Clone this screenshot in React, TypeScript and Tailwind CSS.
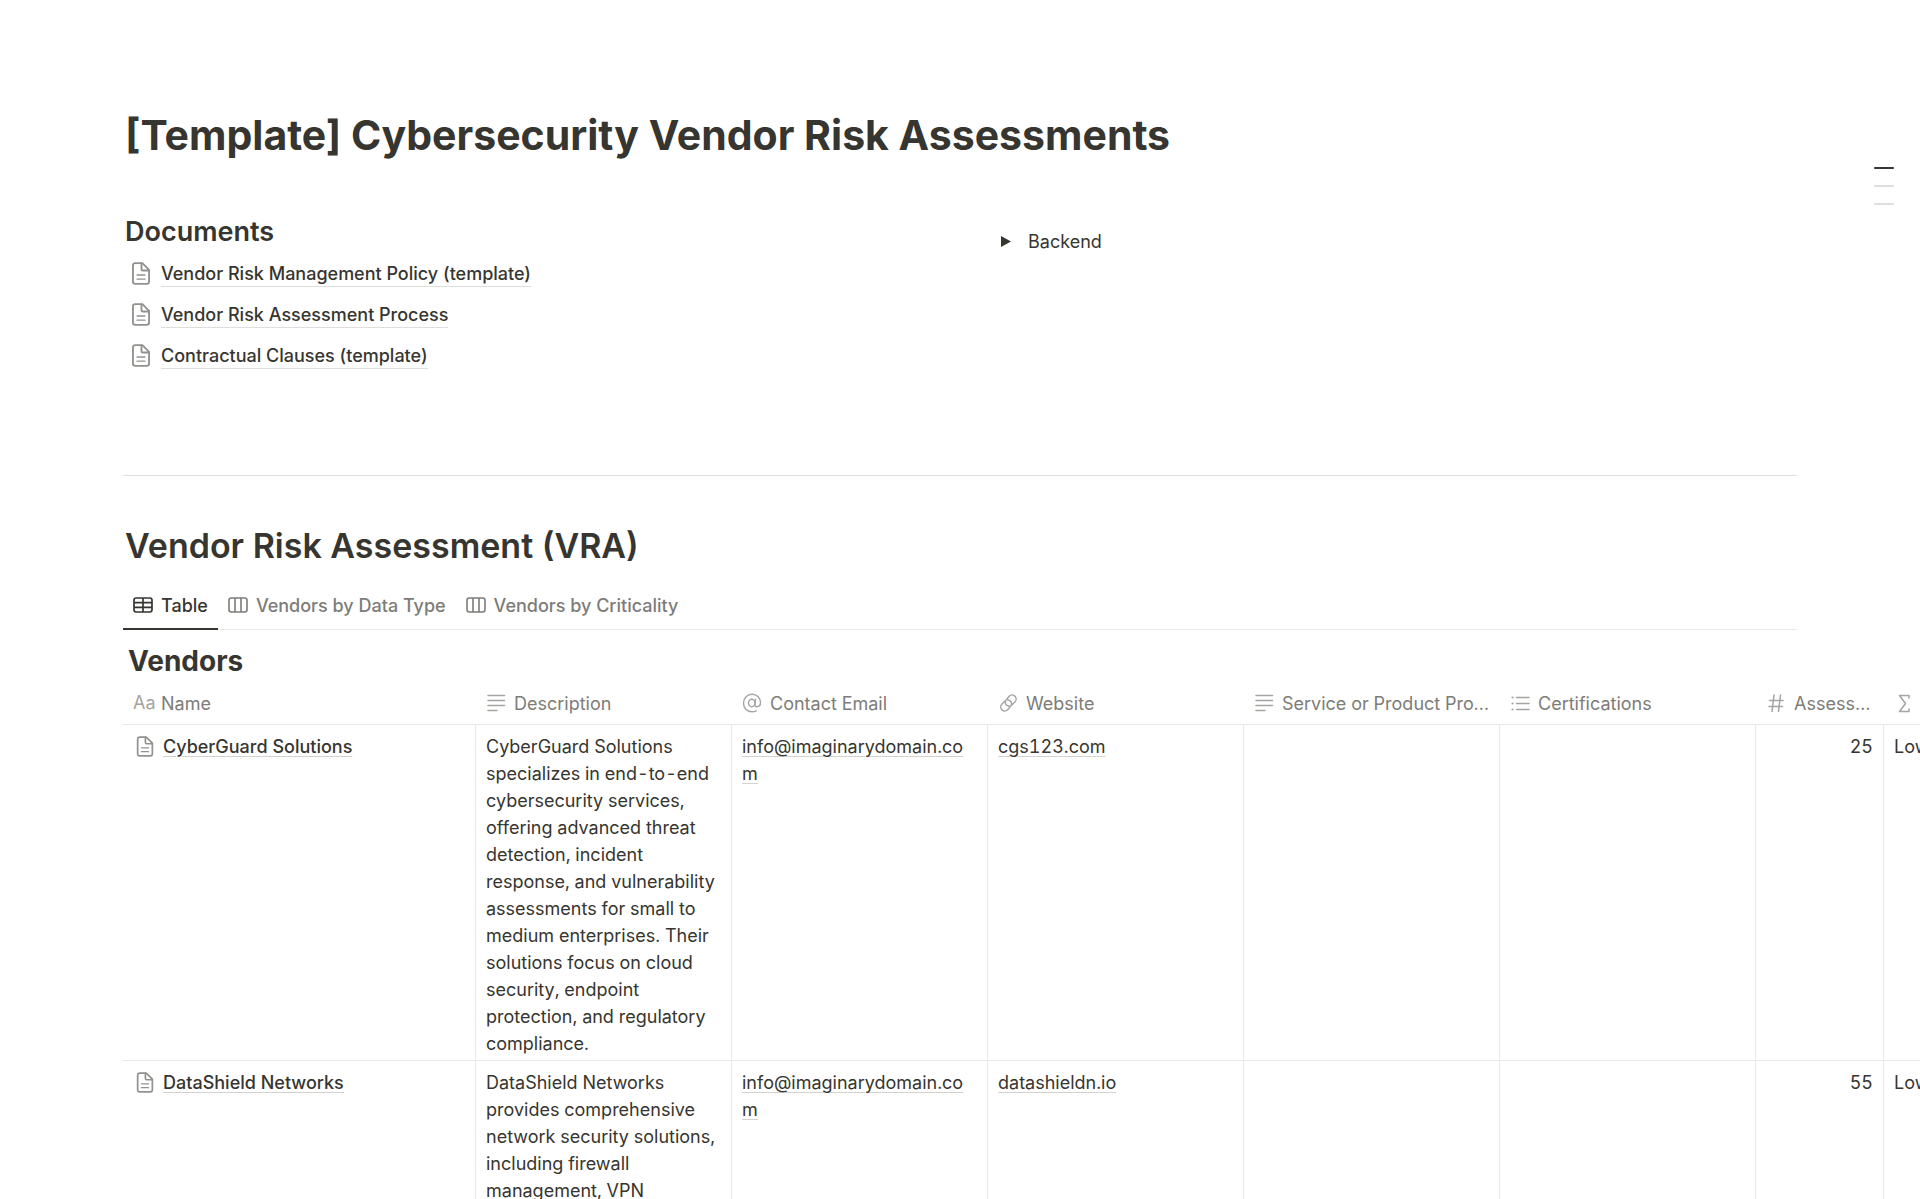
import type { ReactNode } from "react";

type IconProps = { className?: string };

function PageIcon({ className = "" }: IconProps) {
  return (
    <svg className={className} viewBox="0 0 16 20" fill="none" stroke="currentColor" strokeWidth="1.600" strokeLinejoin="round" strokeLinecap="round" aria-hidden="true">
      <path d="M3 1h6.200L15 6.800V17a2 2 0 0 1-2 2H3a2 2 0 0 1-2-2V3a2 2 0 0 1 2-2z" />
      <path d="M8.400 1.200V6.200a1.200 1.200 0 0 0 1.200 1.200H14.800" />
      <path d="M4.600 11.300h6.800M4.600 14.900h6.800" strokeWidth="1.200" />
    </svg>
  );
}

function TableIcon() {
  return (
    <svg className="h-4 w-5" viewBox="0 0 20 16" fill="none" stroke="currentColor" strokeWidth="1.700" aria-hidden="true">
      <rect x="1" y="1" width="18" height="14" rx="2.200" />
      <path d="M1 5.600h18M1 10.300h18M10 1v14" />
    </svg>
  );
}

function BoardIcon() {
  return (
    <svg className="h-4 w-5" viewBox="0 0 20 16" fill="none" stroke="currentColor" strokeWidth="1.600" aria-hidden="true">
      <rect x="1" y="1" width="18" height="14" rx="2.200" />
      <path d="M7 1v14M13 1v14" />
    </svg>
  );
}

function TextIcon() {
  return (
    <svg className="h-5 w-5" viewBox="0 0 20 20" stroke="currentColor" strokeWidth="1.500" strokeLinecap="round" aria-hidden="true">
      <path d="M2 2.500h16.500M2 7.500h16.500M2 12.500h16.500M2 17.500h9" />
    </svg>
  );
}

function ListIcon() {
  return (
    <svg className="h-5 w-5" viewBox="0 0 20 20" stroke="currentColor" strokeWidth="1.500" strokeLinecap="round" aria-hidden="true">
      <path d="M6.500 4.500h12.500M6.500 10.500h12.500M6.500 16.500h12.500" />
      <path d="M2.500 4.500h.01M2.500 10.500h.01M2.500 16.500h.01" strokeWidth="2.200" />
    </svg>
  );
}

function AtIcon() {
  return (
    <svg className="h-5 w-5" viewBox="0 0 24 24" fill="none" stroke="currentColor" strokeWidth="1.700" strokeLinecap="round" aria-hidden="true">
      <ellipse cx="11.700" cy="12" rx="3.900" ry="4.500" />
      <path d="M16.200 7.500l-.6 6.500c-.1 1.500.7 2.500 2.200 2.500 2.400 0 4.400-2 4.400-5C22.200 6 18 1.500 12.200 1.500S1.800 6.200 1.800 12s4 10.500 10.200 10.500c2 0 3.600-.4 5-1.100" />
    </svg>
  );
}

function LinkIcon() {
  return (
    <svg className="h-5 w-5" viewBox="0 0 24 24" fill="none" stroke="currentColor" strokeWidth="1.700" strokeLinecap="round" aria-hidden="true">
      <g transform="translate(12.500 12) rotate(-47)">
        <path d="M-2.500 4.800H-6.500a4.800 4.800 0 0 1 0-9.600H-1.500a4.800 4.800 0 0 1 2.800 8.700" />
        <path d="M2.500 -4.800H6.500a4.800 4.800 0 0 1 0 9.600H1.500a4.800 4.800 0 0 1-2.800-8.700" />
      </g>
    </svg>
  );
}

function HashIcon() {
  return (
    <svg className="h-5 w-5" viewBox="0 0 20 20" fill="none" stroke="currentColor" strokeWidth="1.500" strokeLinecap="round" aria-hidden="true">
      <path d="M8 2L6 18.500M14.500 2l-2 16.500M3.500 7.500h13.500M3 13.500h13.500" />
    </svg>
  );
}

function SigmaIcon() {
  return (
    <svg className="h-5 w-5" viewBox="0 0 20 20" fill="none" stroke="currentColor" strokeWidth="1.500" strokeLinecap="round" strokeLinejoin="round" aria-hidden="true">
      <path d="M15 5V2.500H5.500l6 8-6 8H15V16" />
    </svg>
  );
}

const documents = [
  "Vendor Risk Management Policy (template)",
  "Vendor Risk Assessment Process",
  "Contractual Clauses (template)",
];

const tabs = [
  { label: "Table", icon: <TableIcon />, active: true },
  { label: "Vendors by Data Type", icon: <BoardIcon />, active: false },
  { label: "Vendors by Criticality", icon: <BoardIcon />, active: false },
];

const columns: { label: string; icon: ReactNode; width: string }[] = [
  { label: "Name", icon: <span className="block w-5 text-lg">Aa</span>, width: "w-[353px]" },
  { label: "Description", icon: <TextIcon />, width: "w-64" },
  { label: "Contact Email", icon: <AtIcon />, width: "w-64" },
  { label: "Website", icon: <LinkIcon />, width: "w-64" },
  { label: "Service or Product Provided", icon: <TextIcon />, width: "w-64" },
  { label: "Certifications", icon: <ListIcon />, width: "w-64" },
  { label: "Assessment", icon: <HashIcon />, width: "w-32" },
  { label: "Risk Level", icon: <SigmaIcon />, width: "w-64" },
];

const vendors = [
  {
    name: "CyberGuard Solutions",
    description:
      "CyberGuard Solutions specializes in end-to-end cybersecurity services, offering advanced threat detection, incident response, and vulnerability assessments for small to medium enterprises. Their solutions focus on cloud security, endpoint protection, and regulatory compliance.",
    email: "info@imaginarydomain.com",
    website: "cgs123.com",
    score: 25,
    level: "Low",
  },
  {
    name: "DataShield Networks",
    description:
      "DataShield Networks provides comprehensive network security solutions, including firewall management, VPN",
    email: "info@imaginarydomain.com",
    website: "datashieldn.io",
    score: 55,
    level: "Low",
  },
];

const cell = "border-b border-r border-[#e9e9e7] px-[10px] pt-2 pb-[3px] align-top";
const link = "underline decoration-[#d3d2cf] decoration-1 underline-offset-3";

export default function App() {
  return (
    <main className="relative overflow-hidden bg-white pt-[108px] pl-[123px] font-['Inter',sans-serif] text-lg leading-[27px] text-[#37352f]">
      <nav aria-label="Page outline" className="absolute top-[167px] right-[26px] flex flex-col gap-4">
        <a href="#documents" aria-label="Documents" className="h-[2px] w-5 rounded bg-[#37352f]" />
        <a href="#vra" aria-label="Vendor Risk Assessment" className="h-[2px] w-5 rounded bg-[#dededc]" />
        <a href="#vendors" aria-label="Vendors" className="h-[2px] w-5 rounded bg-[#dededc]" />
      </nav>

      <div className="mr-[123px]">
        <h1 className="px-[2px] text-[41px] leading-[54px] font-bold">[Template] Cybersecurity Vendor Risk Assessments</h1>

        <div className="mt-[52px] grid grid-cols-2 gap-20">
          <section>
            <h3 id="documents" className="px-[2px] text-[27px] leading-9 font-semibold">Documents</h3>
            <ul className="mt-[3px]">
              {documents.map((title) => (
                <li key={title} className="flex h-[41px] items-center gap-[10px] pl-2">
                  <PageIcon className="h-[23px] w-5 text-[#91918e]" />
                  <a href="#" className="border-b border-[#dededc] pt-[2px] leading-6 font-medium">{title}</a>
                </li>
              ))}
            </ul>
          </section>
          <section className="pt-[14px]">
            <button type="button" aria-expanded="false" className="flex items-center gap-4">
              <svg className="h-[11px] w-3" viewBox="0 0 12 11" fill="currentColor" aria-hidden="true">
                <path d="M1 0l10 5.500L1 11z" />
              </svg>
              Backend
            </button>
          </section>
        </div>

        <hr className="mt-[99px] border-[#dfdfdd]" />

        <h2 id="vra" className="mt-[50px] px-[2px] text-[34px] leading-10 font-semibold">Vendor Risk Assessment (VRA)</h2>

        <div role="tablist" className="mt-[14px] flex h-[50px] border-b border-[#e9e9e7]">
          {tabs.map((tab) => (
            <button
              key={tab.label}
              type="button"
              role="tab"
              aria-selected={tab.active}
              className={
                tab.active
                  ? "-mb-px flex items-center gap-2 border-b-2 border-[#37352f] px-[10px] pt-[2px] font-medium"
                  : "-mb-px flex items-center gap-2 border-b-2 border-transparent px-[10px] pt-[2px] font-medium text-[#7d7c78]"
              }
            >
              {tab.icon}
              {tab.label}
            </button>
          ))}
        </div>
      </div>

      <h3 id="vendors" className="mt-[11px] px-[5px] text-[28px] leading-10 font-bold">Vendors</h3>

      <div className="overflow-hidden">
        <table className="w-[2009px] table-fixed border-separate border-spacing-0 tabular-nums">
          <thead>
            <tr>
              {columns.map((column) => (
                <th key={column.label} scope="col" className={`${column.width} h-11 border-b border-[#e9e9e7] px-[10px] pt-px text-left font-normal text-[#7d7c78]`}>
                  <span className="flex items-center gap-2">
                    <span className="shrink-0 text-[#a5a4a1]">{column.icon}</span>
                    <span className="truncate">{column.label}</span>
                  </span>
                </th>
              ))}
            </tr>
          </thead>
          <tbody>
            {vendors.map((vendor) => (
              <tr key={vendor.name}>
                <td className={cell}>
                  <span className="flex items-center gap-2 pl-[2px]">
                    <PageIcon className="h-[21px] w-5 text-[#91918e]" />
                    <a href="#" className={`${link} font-medium`}>{vendor.name}</a>
                  </span>
                </td>
                <td className={cell}>{vendor.description}</td>
                <td className={`${cell} break-all`}>
                  <a href="#" className={link}>{vendor.email}</a>
                </td>
                <td className={cell}>
                  <a href="#" className={link}>{vendor.website}</a>
                </td>
                <td className={cell} />
                <td className={cell} />
                <td className={`${cell} text-right`}>{vendor.score}</td>
                <td className={cell}>{vendor.level}</td>
              </tr>
            ))}
          </tbody>
        </table>
      </div>
    </main>
  );
}
